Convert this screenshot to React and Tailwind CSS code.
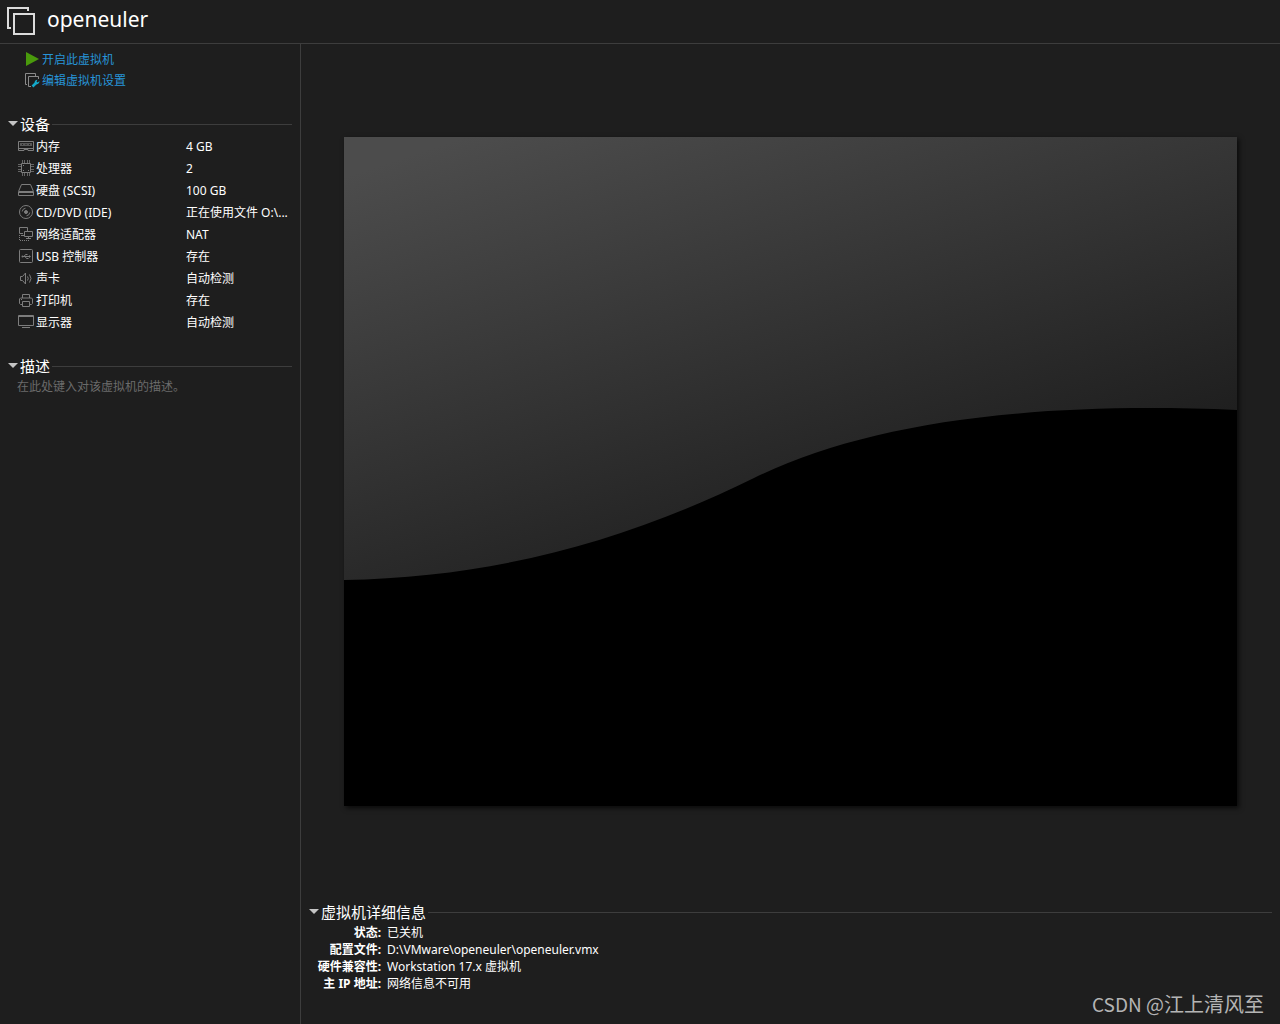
import React from 'react';

const devices = [
    { icon: 'memory', name: '内存', value: '4 GB' },
    { icon: 'cpu', name: '处理器', value: '2' },
    { icon: 'disk', name: '硬盘 (SCSI)', value: '100 GB' },
    { icon: 'cd', name: 'CD/DVD (IDE)', value: '正在使用文件 O:\\...' },
    { icon: 'network', name: '网络适配器', value: 'NAT' },
    { icon: 'usb', name: 'USB 控制器', value: '存在' },
    { icon: 'sound', name: '声卡', value: '自动检测' },
    { icon: 'printer', name: '打印机', value: '存在' },
    { icon: 'display', name: '显示器', value: '自动检测' },
];

const details = [
    { label: '状态:', value: '已关机' },
    { label: '配置文件:', value: 'D:\\VMware\\openeuler\\openeuler.vmx' },
    { label: '硬件兼容性:', value: 'Workstation 17.x 虚拟机' },
    { label: '主 IP 地址:', value: '网络信息不可用' },
];

const shapes = {
    memory: (
        <>
            <path d="M.5 3.5h15v9H10V11.500H6v1H.5zM1 10.500h14" />
            <path d="M2 5h12v3H2z" fill="currentColor" fillOpacity=".6" stroke="none" />
            <path d="M4 6.500h1M7.500 6.500h1M11 6.500h1" stroke="#1e1e1e" />
        </>
    ),
    cpu: (
        <>
            <path d="M3.5 3.500h9v9h-9z" />
            <path d="M4.500 0v3M6.500 0v3M9.500 0v3M11.500 0v3M4.500 13v3M6.500 13v3M9.500 13v3M11.500 13v3M0 4.500h3M0 6.500h3M0 9.500h3M0 11.500h3M13 4.500h3M13 6.500h3M13 9.500h3M13 11.500h3" strokeOpacity=".75" />
            <path d="M5 5.500h1M10 10.500h1M5 10.500h1" />
        </>
    ),
    disk: (
        <>
            <path d="M3.500 2.500h9l3 7v4H.5v-4z" />
            <path d="M1 10h14" strokeWidth="2" />
        </>
    ),
    cd: (
        <>
            <circle cx="8" cy="8" r="6.500" />
            <circle cx="8" cy="8" r="1.500" fill="currentColor" />
            <path d="M4.200 7.500a3.800 3.800 0 0 1 3.300-3.300M11.800 8.500a3.800 3.800 0 0 1-3.300 3.300" />
        </>
    ),
    network: (
        <>
            <path d="M5 7.500H1.500v-6h8V5M3 9.500h3" />
            <path d="M6.500 5.500h8v5h-8zM10.500 10.500v2M8 12.500h5" />
            <path d="M1.500 9v6M2 14.500h9" strokeDasharray="1 1" />
        </>
    ),
    usb: (
        <>
            <rect x="1.500" y="1.500" width="13" height="13" rx="1" />
            <path d="M4 8.500h8M6 8.500l1.500-2h2M7 8.500l1.500 2h2" />
            <path d="M11 7l2 1.500-2 1.500z" fill="currentColor" stroke="none" />
            <circle cx="4.500" cy="8.500" r="1" fill="currentColor" stroke="none" />
        </>
    ),
    sound: (
        <>
            <path d="M2.500 6.500h2l3-3.500v11l-3-3.500h-2zM9.500 6.500q1.500 2 0 4M11.500 4.500q3 4 0 8" />
        </>
    ),
    printer: (
        <>
            <path d="M4.500 6V2.500h7V6M4.500 12.500h-2l-1-1v-4.500l1-1h11l1 1v4.500l-1 1h-2" />
            <path d="M4.500 9.500h7v5h-7zM3 7.500h1" />
        </>
    ),
    display: (
        <>
            <path d="M.5 1.500h15v10H.5zM1 2.500h14" />
            <path d="M4 13.500h8" />
        </>
    ),
};

function DeviceIcon({ name }) {
    return (
        <svg className="h-4 w-4 shrink-0 text-[#7d7d7d]" viewBox="0 0 16 16" fill="none" stroke="currentColor" aria-hidden="true">
            {shapes[name]}
        </svg>
    );
}

function SectionTitle({ children }) {
    return (
        <h2 className="flex h-5 items-center gap-0.5">
            <button type="button" aria-expanded="true" className="flex items-center gap-0.5 text-[15px] leading-5 text-white">
                <svg className="h-5 w-[10px]" viewBox="0 0 10 20" aria-hidden="true">
                    <path d="M0 7h10L5 12z" fill="#c4c4c4" />
                </svg>
                {children}
            </button>
            <span className="h-px flex-1 bg-[#3d3d3d]" />
        </h2>
    );
}

function Sidebar() {
    return (
        <aside className="w-[301px] shrink-0 border-r border-[#3d3d3d] pl-2 pr-2 pt-[5px]">
            {/* Commands */}
            <div className="flex flex-col items-start pl-4">
                <button type="button" className="flex h-[21px] items-center gap-0.5 text-[#2794d8]">
                    <svg className="h-4 w-4" viewBox="0 0 16 16" aria-hidden="true">
                        <path d="M2 0l13 7-13 7z" fill="#4a9a0c" />
                    </svg>
                    开启此虚拟机
                </button>
                <button type="button" className="flex h-[21px] items-center gap-0.5 text-[#2794d8]">
                    <svg className="h-4 w-4" viewBox="0 0 16 16" fill="none" aria-hidden="true">
                        <path d="M3 11.500H1.500V.5h10V3M7 13.500H4.500V3.500h10V6" stroke="#8a8a8a" />
                        <path d="M8.500 13.500l4-4" stroke="#14aacb" strokeWidth="2.500" />
                        <path d="M15.500 8l-2 1.500-1-1 1-1.800c-2 0-3.200 1.500-2.700 3.300l1.200 1.200c2 .5 3.500-1 3.500-3.200z" fill="#14aacb" />
                    </svg>
                    编辑虚拟机设置
                </button>
            </div>

            {/* Devices */}
            <section className="pt-[23px]">
                <SectionTitle>设备</SectionTitle>
                <table className="mt-px w-full table-fixed">
                    <tbody>
                        {devices.map((device) => (
                            <tr key={device.name} className="h-[22px]">
                                <th scope="row" className="w-[178px] p-0 pl-[10px] text-left font-normal">
                                    <span className="flex items-center gap-0.5">
                                        <DeviceIcon name={device.icon} />
                                        <span className="pt-0.5">{device.name}</span>
                                    </span>
                                </th>
                                <td className="whitespace-nowrap p-0 pt-0.5">{device.value}</td>
                            </tr>
                        ))}
                    </tbody>
                </table>
            </section>

            {/* Description */}
            <section className="pt-[23px]">
                <SectionTitle>描述</SectionTitle>
                <textarea
                    aria-label="描述"
                    rows={3}
                    placeholder="在此处键入对该虚拟机的描述。"
                    className="mt-[3px] block w-full resize-none bg-transparent pl-[9px] leading-4 placeholder:text-[#6b6b6b] focus:outline-none"
                />
            </section>
        </aside>
    );
}

function Preview() {
    return (
        <div className="flex flex-1 items-center px-[43px]">
            <svg className="block h-auto w-full bg-black shadow-[2px_2px_5px_rgba(0,0,0,0.7)]" viewBox="0 0 893 669" role="img" aria-label="openeuler">
                <defs>
                    <linearGradient id="screen" gradientUnits="userSpaceOnUse" x1="12" y1="36" x2="169" y2="511">
                        <stop offset="0" stopColor="#4c4c4c" />
                        <stop offset="1" stopColor="#1f1f1f" />
                    </linearGradient>
                </defs>
                <path d="M0 0H893V273C680 264 520 287 410 341C280 405 150 440 0 443Z" fill="url(#screen)" />
            </svg>
        </div>
    );
}

function Details() {
    return (
        <section className="h-[125px] pl-2 pr-2 pt-[3px]">
            <SectionTitle>虚拟机详细信息</SectionTitle>
            <dl className="mt-0.5 grid grid-cols-[72px_1fr] gap-x-1.5 leading-[17px]">
                {details.map((row) => (
                    <React.Fragment key={row.label}>
                        <dt className="whitespace-nowrap text-right font-bold">{row.label}</dt>
                        <dd>{row.value}</dd>
                    </React.Fragment>
                ))}
            </dl>
        </section>
    );
}

export default function App() {
    return (
        <div className="relative flex min-h-screen flex-col bg-[#1e1e1e] font-['Noto_Sans','Noto_Sans_CJK_SC',sans-serif] text-[12px] leading-4 text-white">
            <header className="flex h-11 items-center gap-3 border-b border-[#3d3d3d] pb-0.5 pl-[7px]">
                <svg className="h-7 w-7" viewBox="0 0 28 28" fill="none" stroke="#dcdcdc" strokeWidth="2" aria-hidden="true">
                    <path d="M4 21H1V1h20v3" />
                    <path d="M7 7h20v20H7z" />
                </svg>
                <h1 className="pb-1 text-[21px] leading-7">openeuler</h1>
            </header>

            <div className="flex flex-1">
                <Sidebar />
                <main className="flex min-w-0 flex-1 flex-col">
                    <Preview />
                    <Details />
                </main>
            </div>

            <div className="absolute bottom-1 right-4 font-['Noto_Sans_CJK_SC',sans-serif] text-[20px] leading-8 text-[#b4b4b4]">
                <span className="text-[19px]">CSDN @</span>江上清风至
            </div>
        </div>
    );
}
